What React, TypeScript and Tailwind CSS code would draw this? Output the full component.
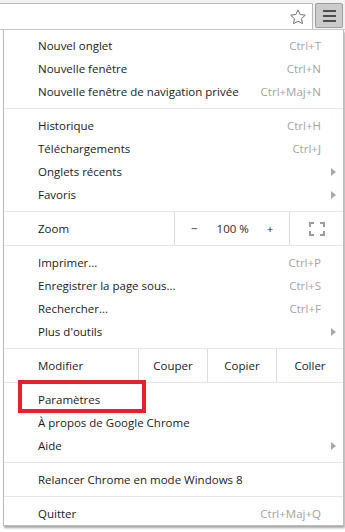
import { ReactNode } from 'react';

type Item = {
  label: string;
  shortcut?: string;
  submenu?: boolean;
};

const groups: Item[][] = [
  [
    { label: 'Nouvel onglet', shortcut: 'Ctrl+T' },
    { label: 'Nouvelle fenêtre', shortcut: 'Ctrl+N' },
    { label: 'Nouvelle fenêtre de navigation privée', shortcut: 'Ctrl+Maj+N' },
  ],
  [
    { label: 'Historique', shortcut: 'Ctrl+H' },
    { label: 'Téléchargements', shortcut: 'Ctrl+J' },
    { label: 'Onglets récents', submenu: true },
    { label: 'Favoris', submenu: true },
  ],
];

const groupsAfterZoom: Item[] = [
  { label: 'Imprimer...', shortcut: 'Ctrl+P' },
  { label: 'Enregistrer la page sous...', shortcut: 'Ctrl+S' },
  { label: 'Rechercher...', shortcut: 'Ctrl+F' },
  { label: "Plus d'outils", submenu: true },
];

function Row({ item }: { item: Item }) {
  return (
    <div className="flex h-[23px] items-center pl-[34px]">
      <span className="flex-1 text-[#1b1b1b]">{item.label}</span>
      {item.shortcut && <span className="text-[#a3a3a3]">{item.shortcut}</span>}
      <span className="flex w-[22px] justify-end pr-[7px]">
        {item.submenu && (
          <span className="h-0 w-0 border-y-[4px] border-l-[5px] border-y-transparent border-l-[#a8a8a8]" />
        )}
      </span>
    </div>
  );
}

function Separator() {
  return <div className="my-[5px] h-px bg-[#e6e6e6]" />;
}

function Cell({ children, className }: { children: ReactNode; className?: string }) {
  return <div className={`flex h-full items-center border-l border-[#dcdcdc] ${className ?? ''}`}>{children}</div>;
}

function StarIcon() {
  return (
    <svg width="18" height="18" viewBox="0 0 24 24" fill="none" stroke="#6f6f6f" strokeWidth="1.3" strokeLinejoin="round">
      <path d="M12 2.5l2.9 6.2 6.8.8-5 4.7 1.3 6.7L12 17.6l-6 3.3 1.3-6.7-5-4.7 6.8-.8z" />
    </svg>
  );
}

function FullscreenIcon() {
  return (
    <svg width="16" height="14" viewBox="0 0 16 14" fill="none" stroke="#9c9c9c" strokeWidth="2">
      <path d="M1 5V1h4M11 1h4v4M15 9v4h-4M5 13H1V9" />
    </svg>
  );
}

export default function App() {
  return (
    <div
      className="relative h-[532px] w-[345px] overflow-hidden bg-white text-[11.5px]"
      style={{ fontFamily: '"Open Sans", "Noto Sans", sans-serif' }}
    >
      {/* toolbar */}
      <div className="flex h-[30px] border-b border-[#c8c8c8] bg-[#f1f1f1] pt-[3px]">
        <div className="flex flex-1 items-center justify-end border-t border-r border-[#b9b9b9] bg-white pr-[5px]">
          <StarIcon />
        </div>
        <div className="ml-[2px] mr-[2px] mb-[1px] flex w-[28px] flex-col items-center justify-center gap-[3px] rounded-[2px] border border-[#9d9d9d] bg-[#cbcbcb]">
          <span className="h-[2px] w-[13px] bg-[#4d4d4d]" />
          <span className="h-[2px] w-[13px] bg-[#4d4d4d]" />
          <span className="h-[2px] w-[13px] bg-[#4d4d4d]" />
        </div>
      </div>

      {/* menu */}
      <div className="ml-[3px] mr-[1px] border-x border-b border-[#bdbdbd] bg-white pt-[4px] shadow-[1px_2px_2px_rgba(0,0,0,0.35)]">
        {groups.map((g, i) => (
          <div key={i}>
            {i > 0 && <Separator />}
            {g.map((item) => (
              <Row key={item.label} item={item} />
            ))}
          </div>
        ))}
        <div className="mt-[5px] h-px bg-[#e6e6e6]" />
        <div className="flex h-[33px] items-center">
          <div className="flex w-[170px] pl-[34px] text-[#1b1b1b]">Zoom</div>
          <Cell className="w-[115px] text-[#2b2b2b]">
            <span className="ml-[16px]">−</span>
            <span className="ml-[19px]">100 %</span>
            <span className="ml-[18px]">+</span>
          </Cell>
          <Cell className="flex-1 justify-center">
            <FullscreenIcon />
          </Cell>
        </div>
        <div className="mb-[5px] h-px bg-[#e6e6e6]" />
        {groupsAfterZoom.map((item) => (
          <Row key={item.label} item={item} />
        ))}
        <div className="mt-[5px] h-px bg-[#e6e6e6]" />
        <div className="flex h-[33px] items-center text-[#1b1b1b]">
          <div className="w-[134px] pl-[34px]">Modifier</div>
          <Cell className="w-[69px] justify-center">Couper</Cell>
          <Cell className="w-[69px] justify-center">Copier</Cell>
          <Cell className="flex-1 justify-center">Coller</Cell>
        </div>
        <div className="mb-[5px] h-px bg-[#e6e6e6]" />
        <Row item={{ label: 'Paramètres' }} />
        <Row item={{ label: 'À propos de Google Chrome' }} />
        <Row item={{ label: 'Aide', submenu: true }} />
        <Separator />
        <Row item={{ label: 'Relancer Chrome en mode Windows 8' }} />
        <Separator />
        <Row item={{ label: 'Quitter', shortcut: 'Ctrl+Maj+Q' }} />
      </div>

      {/* annotation box */}
      <div className="absolute left-[18px] top-[380px] h-[33px] w-[128px] border-[4px] border-[#e8202a]" />
    </div>
  );
}
